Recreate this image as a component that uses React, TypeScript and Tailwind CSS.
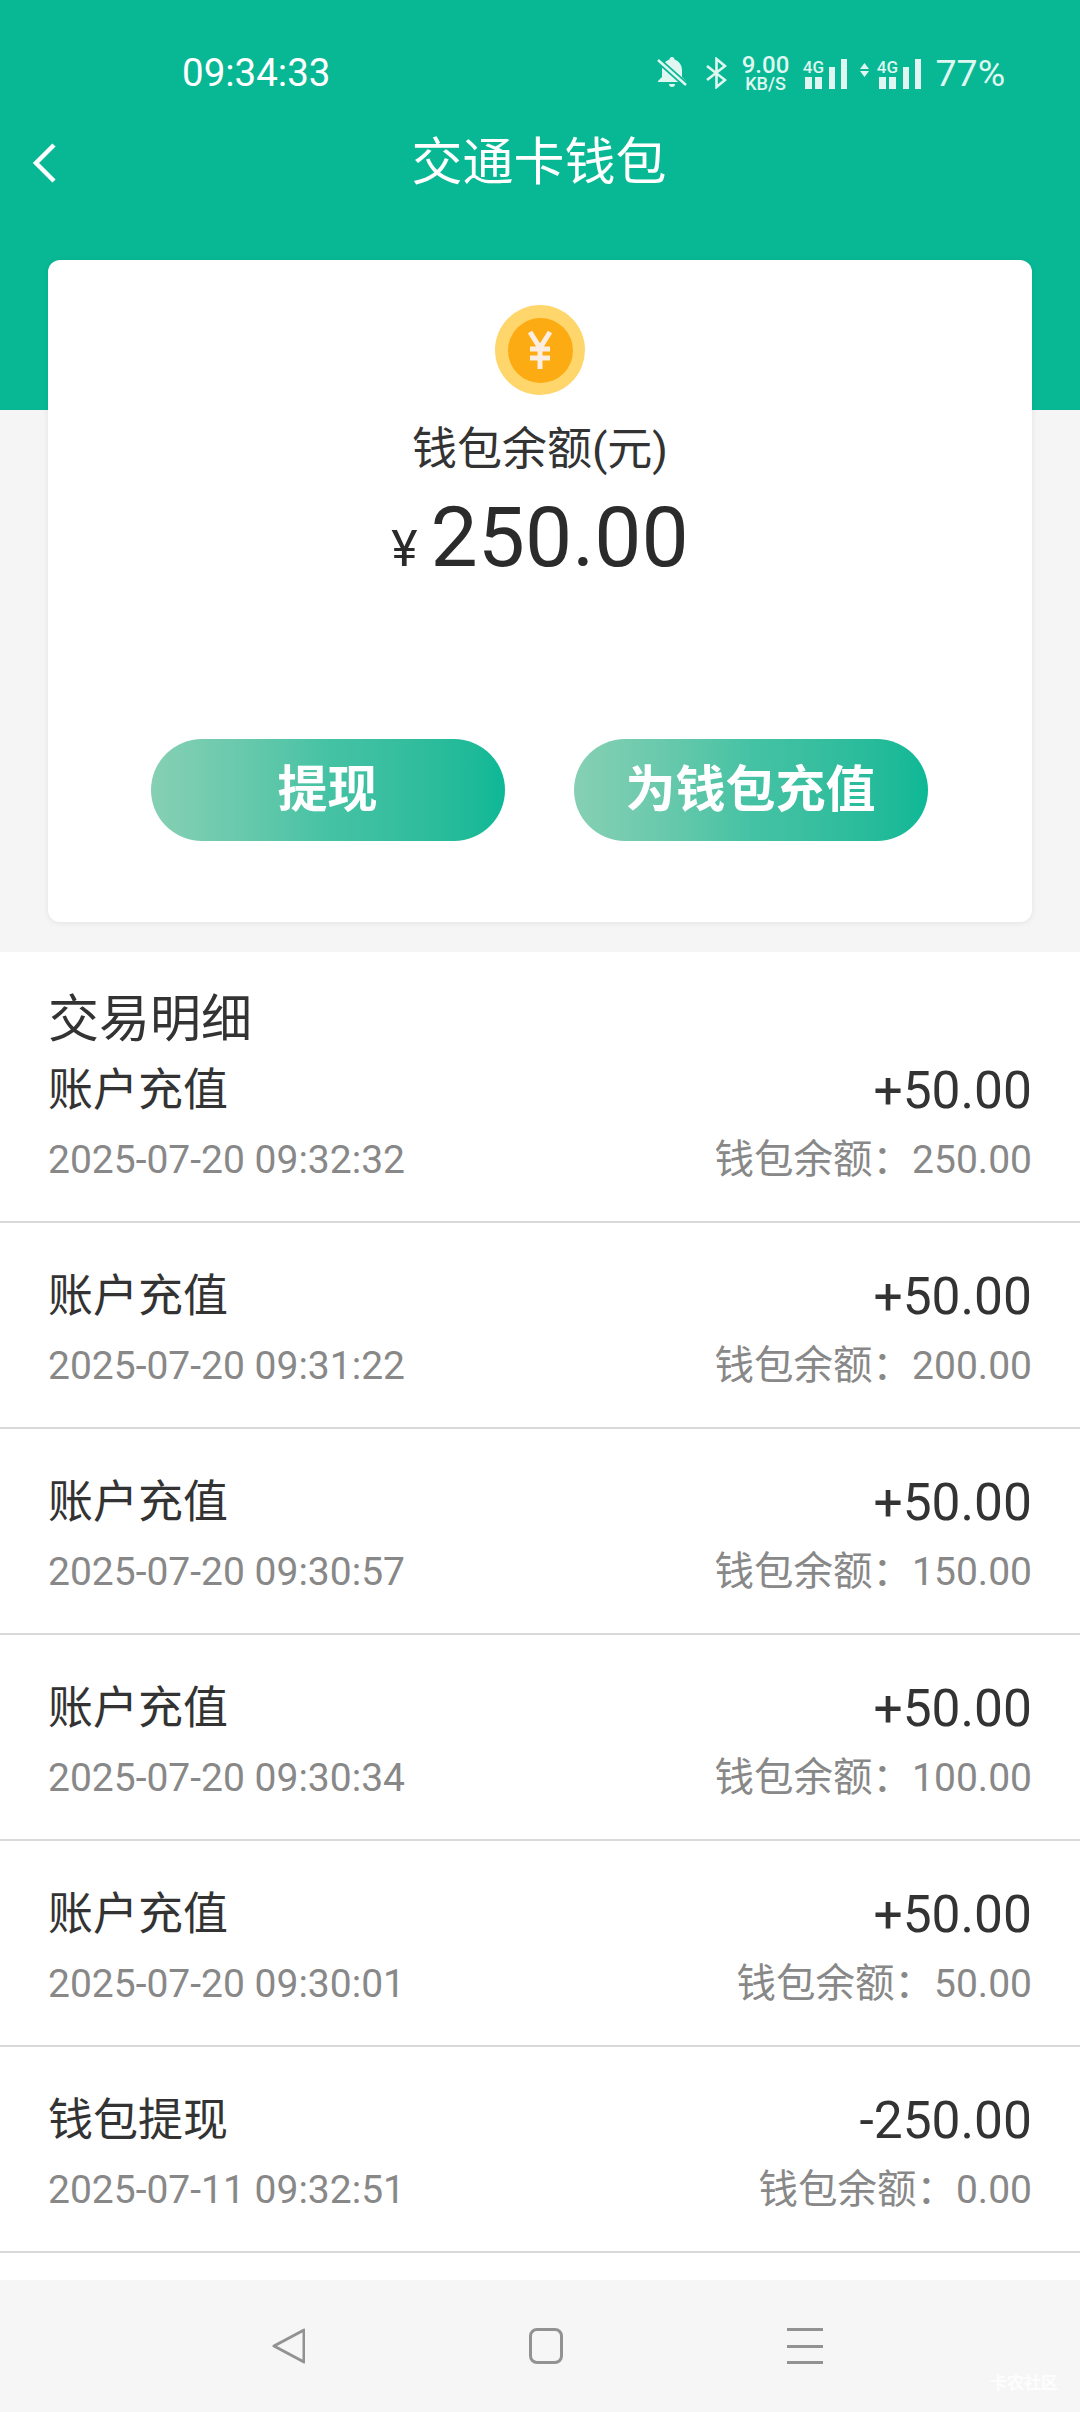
const rows = [
  { title: "账户充值", amount: "+50.00", time: "2025-07-20 09:32:32", balance: "250.00" },
  { title: "账户充值", amount: "+50.00", time: "2025-07-20 09:31:22", balance: "200.00" },
  { title: "账户充值", amount: "+50.00", time: "2025-07-20 09:30:57", balance: "150.00" },
  { title: "账户充值", amount: "+50.00", time: "2025-07-20 09:30:34", balance: "100.00" },
  { title: "账户充值", amount: "+50.00", time: "2025-07-20 09:30:01", balance: "50.00" },
  { title: "钱包提现", amount: "-250.00", time: "2025-07-11 09:32:51", balance: "0.00" },
];

const BellOff = () => (
  <svg width="30" height="32" viewBox="0 0 30 32" fill="#dff7f0">
    <path d="M15 0a2.500 2.500 0 0 1 2.500 2.500C22 4 25 8 25 13v7l4 4v1H1v-1l4-4v-7C5 8 8 4 12.500 2.500A2.500 2.500 0 0 1 15 0z" />
    <path d="M12 27h6a3 3 0 0 1-6 0z" />
    <path d="M1 3l28 25" stroke="#08b894" strokeWidth="6" />
    <path d="M1 3l28 25" stroke="#dff7f0" strokeWidth="2.500" />
  </svg>
);

const Bluetooth = () => (
  <svg width="21" height="32" viewBox="0 0 21 32" fill="none" stroke="#dff7f0" strokeWidth="2.600">
    <path d="M1 9l18 14-8.500 7V2l8.500 7L1 23" />
  </svg>
);

const Signal = ({ arrows }: { arrows?: boolean }) => (
  <div className="flex h-[31px] items-end">
    {arrows && (
      <svg className="mr-[7px] mb-[10px]" width="9" height="18" viewBox="0 0 9 18" fill="#dff7f0">
        <path d="M4.500 2 9 8H0zM4.500 16 0 10h9z" />
      </svg>
    )}
    <div className="flex w-[22px] flex-col items-center">
      <span className="h-[17px] text-[17px] leading-[17px] font-medium">4G</span>
      <div className="flex gap-[3px] pt-[1px]">
        <div className="h-[12px] w-[7px] bg-[#dff7f0]" />
        <div className="h-[12px] w-[7px] bg-[#dff7f0]" />
      </div>
    </div>
    <div className="ml-[5px] h-[22px] w-[6px] bg-[#dff7f0]" />
    <div className="ml-[6px] h-[30px] w-[6px] bg-[#dff7f0]" />
  </div>
);

const YenMark = () => (
  <svg width="24" height="38" viewBox="0 0 24 38" fill="none" stroke="#fbeee0" strokeWidth="5">
    <path d="M2 1l10 16L22 1M12 16v22M2 18h20M2 27h20" />
  </svg>
);

const Row = ({ row, first }: { row: (typeof rows)[number]; first?: boolean }) => (
  <div className={`border-b-2 border-[#d9d9d9] px-[48px] pb-[36px] ${first ? "pt-[11px]" : "pt-[44px]"}`}>
    <div className="flex h-[60px] items-center justify-between text-[#333333]">
      <span className="text-[45px]">{row.title}</span>
      <span className="text-[51.500px]">{row.amount}</span>
    </div>
    <div className="mt-[14px] flex h-[50px] items-center justify-between text-[39px] text-[#888888]">
      <span>{row.time}</span>
      <span className="flex items-center">
        <span className="text-[39.500px]">钱包余额：</span>
        {row.balance}
      </span>
    </div>
  </div>
);

export default function App() {
  return (
    <div className="flex h-[2412px] w-[1080px] flex-col overflow-hidden bg-[#f5f5f5] font-['Roboto','Noto_Sans_CJK_SC',sans-serif]">
      <div className="h-[410px] shrink-0 bg-[#08b894] text-white">
        <div className="flex h-[146px] items-start pt-[51px]">
          <span className="ml-[182px] text-[38.500px] leading-[44px]">09:34:33</span>
          <div className="ml-[327px] flex items-center text-[#dff7f0]">
            <BellOff />
            <div className="ml-[19px]">
              <Bluetooth />
            </div>
            <div className="ml-[14px] flex w-[48px] flex-col items-center">
              <span className="text-[24px] leading-[21px] font-medium">9.00</span>
              <span className="text-[18px] leading-[15px] font-medium">KB/S</span>
            </div>
            <div className="ml-[13px]">
              <Signal />
            </div>
            <div className="ml-[13px]">
              <Signal arrows />
            </div>
            <span className="ml-[14px] text-[37.500px] leading-[44px]">77%</span>
          </div>
        </div>
        <div className="relative flex h-[34px] items-center justify-center pr-[2px]">
          <svg className="absolute left-[31px]" width="26" height="40" viewBox="0 0 26 40" fill="none" stroke="white" strokeWidth="4.500">
            <path d="M23 2 5 20l18 18" />
          </svg>
          <span className="text-[51px]">交通卡钱包</span>
        </div>
      </div>

      <div className="relative mx-[48px] -mt-[150px] flex h-[662px] shrink-0 flex-col items-center rounded-[12px] bg-white pt-[45px] shadow-[0_1px_6px_rgba(0,0,0,0.08)]">
        <div className="flex h-[90px] w-[90px] items-center justify-center rounded-full bg-[#ffd66b]">
          <div className="flex h-[65px] w-[65px] items-center justify-center rounded-full bg-[#fdab12]">
            <YenMark />
          </div>
        </div>
        <div className="mt-[27px] text-[45px] leading-[56px] text-[#333333]">钱包余额(元)</div>
        <div className="mt-[18px] flex h-[84px] items-baseline text-[#2b2b2b]">
          <span className="mr-[13px] text-[50px] leading-[84px]">¥</span>
          <span className="text-[84px] leading-[84px]">250.00</span>
        </div>
        <div className="mt-[159px] mr-[2px] flex justify-center gap-[69px]">
          <button className="h-[102px] w-[354px] rounded-full bg-gradient-to-r from-[#86d0b4] via-[#45c2a4] to-[#0cb896] text-[50px] font-bold text-white">
            提现
          </button>
          <button className="h-[102px] w-[354px] rounded-full bg-gradient-to-r from-[#86d0b4] via-[#45c2a4] to-[#0cb896] text-[50px] font-bold text-white">
            为钱包充值
          </button>
        </div>
      </div>

      <div className="mt-[30px] flex-1 bg-white pt-[38px]">
        <div className="h-[60px] px-[48px] text-[51px] leading-[60px] text-[#333333]">交易明细</div>
        {rows.map((row, i) => (
          <Row key={row.time} row={row} first={i === 0} />
        ))}
      </div>

      <div className="relative flex h-[132px] shrink-0 items-center gap-[224px] bg-[#f6f6f6] pl-[272px]">
        <svg width="33" height="36" viewBox="0 0 33 36" fill="none" stroke="#929292" strokeWidth="3" strokeLinejoin="round">
          <path d="M32 2v32L2 18z" />
        </svg>
        <div className="h-[36px] w-[34px] rounded-[8px] border-[3px] border-[#929292]" />
        <div className="flex h-[36px] w-[36px] flex-col justify-between">
          <div className="h-[3px] bg-[#929292]" />
          <div className="h-[3px] bg-[#929292]" />
          <div className="h-[3px] bg-[#929292]" />
        </div>
        <span className="absolute right-[22px] bottom-[18px] text-[17px] leading-[22px] font-bold text-white/80">卡农社区</span>
      </div>
    </div>
  );
}
